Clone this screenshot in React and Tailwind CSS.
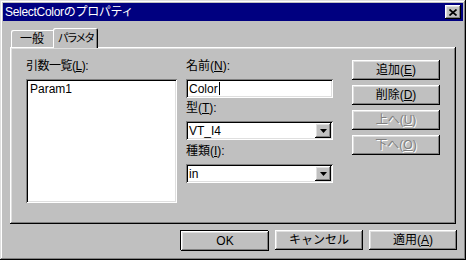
import React from "react";

const raised =
  "shadow-[inset_-1px_-1px_#000,inset_1px_1px_#fff,inset_-2px_-2px_#808080,inset_2px_2px_#dfdfdf]";
const sunken =
  "shadow-[inset_1px_1px_#808080,inset_-1px_-1px_#fff,inset_2px_2px_#000,inset_-2px_-2px_#dfdfdf]";

const Key = ({ children }) => <span className="underline underline-offset-[1px]">{children}</span>;

const Btn = ({ children, disabled, className = "" }) => (
  <div
    className={`${raised} bg-[#c0c0c0] flex items-center justify-center w-[88px] h-[20px] whitespace-nowrap ${
      disabled ? "text-[#808080] [text-shadow:1px_1px_0_#fff]" : "text-black"
    } ${className}`}
  >
    {children}
  </div>
);

const Combo = ({ value }) => (
  <div className={`${sunken} bg-white h-[19px] w-[147px] flex items-center pl-[3px] pr-[2px]`}>
    <span className="flex-1">{value}</span>
    <div className={`${raised} bg-[#c0c0c0] w-[16px] h-[15px] flex items-center justify-center`}>
      <svg width="7" height="4" viewBox="0 0 7 4">
        <polygon points="0,0 7,0 3.5,4" fill="#000" />
      </svg>
    </div>
  </div>
);

export default function App() {
  return (
    <div
      className="w-[466px] h-[260px] bg-[#c0c0c0] p-[3px] flex flex-col text-[12px] leading-[14px] text-black shadow-[inset_-1px_-1px_#000,inset_1px_1px_#dfdfdf,inset_-2px_-2px_#808080,inset_2px_2px_#fff]"
      style={{ fontFamily: '"Liberation Sans", "Noto Sans CJK JP", sans-serif' }}
    >
      {/* title bar */}
      <div className="h-[18px] bg-[#000080] flex items-center pl-[2px] pr-[2px]">
        <span className="flex-1 text-white tracking-[-0.3px]">SelectColorのプロパティ</span>
        <div className={`${raised} bg-[#c0c0c0] w-[16px] h-[14px] flex items-center justify-center`}>
          <svg width="8" height="7" viewBox="0 0 8 7">
            <path d="M0.5 0.5L7.5 6.5M7.5 0.5L0.5 6.5" stroke="#000" strokeWidth="1.7" />
          </svg>
        </div>
      </div>

      {/* tabs */}
      <div className="mt-[7px] ml-[7px] h-[20px] flex items-end relative z-10 whitespace-nowrap">
        <div className="ml-[1px] mb-[1px] w-[42px] h-[17px] rounded-tl-[2px] shadow-[inset_1px_1px_#fff] bg-[#c0c0c0] flex items-center justify-center pt-[1px]">
          一般
        </div>
        <div className="w-[45px] h-[20px] rounded-t-[2px] bg-[#c0c0c0] shadow-[inset_1px_1px_#fff,inset_-1px_0_#000,inset_-2px_0_#808080] flex items-center justify-center pb-[1px] text-[11px] tracking-[-2px]">
          パラメタ
        </div>
      </div>

      {/* panel */}
      <div className={`ml-[7px] -mt-[1px] w-[446px] h-[177px] ${raised} flex pl-[16px] pt-[12px]`}>
        <div className="w-[151px] flex flex-col">
          <div className="h-[20px] tracking-[-0.5px]">
            引数一覧(<Key>L</Key>):
          </div>
          <div className={`${sunken} bg-white h-[124px] pl-[4px] pt-[3px]`}>Param1</div>
        </div>

        <div className="ml-[9px] w-[147px] flex flex-col">
          <div className="h-[20px]">
            名前(<Key>N</Key>):
          </div>
          <div className={`${sunken} bg-white h-[19px] flex items-center pl-[3px]`}>
            Color<span className="inline-block w-[1px] h-[13px] bg-black ml-[1px]" />
          </div>
          <div className="h-[20px] mt-[3px]">
            型(<Key>T</Key>):
          </div>
          <Combo value="VT_I4" />
          <div className="h-[20px] mt-[4px]">
            種類(<Key>I</Key>):
          </div>
          <Combo value="in" />
        </div>

        <div className="ml-[19px] mt-[1px] flex flex-col gap-[5px]">
          <Btn>
            追加(<Key>E</Key>)
          </Btn>
          <Btn>
            削除(<Key>D</Key>)
          </Btn>
          <Btn disabled>
            上へ(<Key>U</Key>)
          </Btn>
          <Btn disabled>
            下へ(<Key>O</Key>)
          </Btn>
        </div>
      </div>

      {/* bottom buttons */}
      <div className="mt-[6px] pl-[177px] flex">
        <div className="border border-black w-[88px] h-[20px]">
          <Btn className="w-[86px] h-[18px]">OK</Btn>
        </div>
        <Btn className="ml-[7px]">キャンセル</Btn>
        <Btn className="ml-[6px]">
          適用(<Key>A</Key>)
        </Btn>
      </div>
    </div>
  );
}
